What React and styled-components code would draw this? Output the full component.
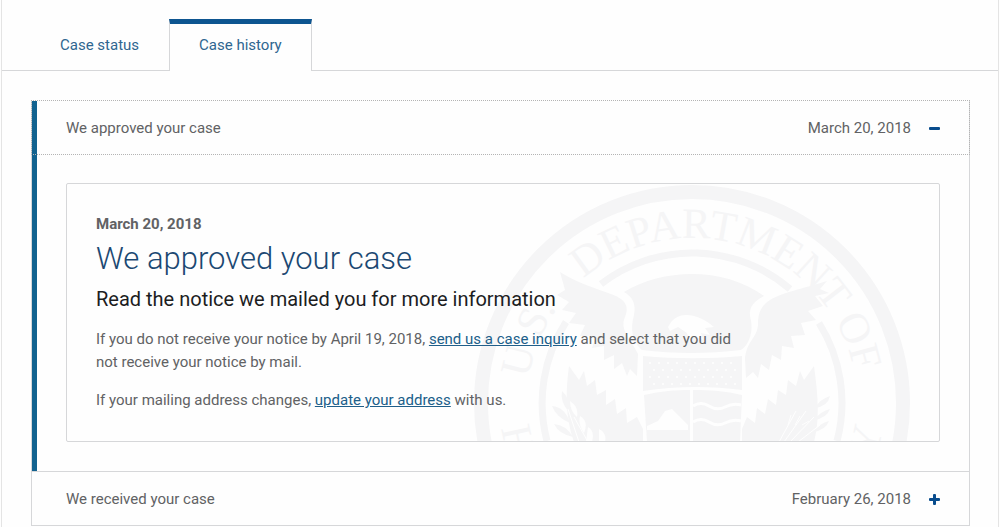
import React, { useState } from "react";
import styled, { createGlobalStyle } from "styled-components";

const blue = "#0d5590";
const line = "#d6d7d9";
const mark = "#f5f5f6";

const GlobalStyle = createGlobalStyle`
  *, *::before, *::after { box-sizing: border-box; }
  body {
    margin: 0;
    background: #fefefe;
    color: #616264;
    font: 400 15px/23px Roboto, "Open Sans", sans-serif;
  }
`;

const Page = styled.main`
  min-height: 100vh;
  margin: 0 1px;
  border: 1px solid #e4e4e4;
  border-width: 0 1px;
  padding-top: 19px;
`;

const Tabs = styled.div`
  display: flex;
  padding-left: 28px;
  box-shadow: inset 0 -1px ${line};
`;

const Tab = styled.button`
  height: 52px;
  padding: 0 29px 4px;
  border: 1px solid ${(p) => (p.$active ? line : "transparent")};
  border-top: 5px solid ${(p) => (p.$active ? blue : "transparent")};
  border-bottom: 0;
  background: ${(p) => (p.$active ? "#fefefe" : "transparent")};
  color: #2f6690;
  font: inherit;
  cursor: pointer;
`;

const Accordion = styled.section`
  margin: 30px 28px 0 29px;
  border: 1px solid ${line};
  border-width: 0 1px;
`;

const Item = styled.article`
  border-bottom: 1px solid ${line};
  box-shadow: ${(p) => (p.$open ? "inset 5px 0 #12628f" : "none")};
`;

const ItemTitle = styled.h3`
  margin: 0;
  font: inherit;
`;

const ItemButton = styled.button`
  display: flex;
  align-items: center;
  width: 100%;
  height: 53px;
  padding: 2px 29px 0 34px;
  border: 0;
  background: transparent;
  color: inherit;
  font: inherit;
  text-align: left;
  cursor: pointer;
  outline: ${(p) => (p.$open ? "1px dotted #b4b4b4" : "none")};
`;

const ItemDate = styled.span`
  margin-left: auto;
  margin-right: 18px;
`;

const Sign = styled.svg`
  display: block;
  width: 11px;
  height: 11px;
  fill: #084c8d;
`;

const Panel = styled.div`
  padding: 29px 29px 29px 34px;
`;

const Card = styled.div`
  position: relative;
  overflow: hidden;
  padding: 29px;
  border: 1px solid ${line};
  border-radius: 2px;
`;

const Seal = styled.svg`
  position: absolute;
  top: 0;
  right: 27px;
  width: 440px;
  height: 258px;
`;

const SealText = styled.text`
  font-family: "Liberation Serif", serif;
  font-size: 43px;
  fill: ${mark};
`;

const Content = styled.div`
  position: relative;
  max-width: 656px;
`;

const CardDate = styled.p`
  margin: 0;
  font-weight: 700;
`;

const Heading = styled.h2`
  margin: 0 0 5px;
  color: #1b4872;
  font-size: 31px;
  font-weight: 300;
  line-height: 46px;
`;

const Subheading = styled.h4`
  margin: 0 0 17px;
  color: #1c1d1f;
  font-size: 20px;
  font-weight: 400;
  line-height: 24px;
`;

const Text = styled.p`
  margin: 0 0 15px;
  &:last-child { margin: 0; }
`;

const Link = styled.a`
  color: #205f8a;
  text-decoration: underline;
`;

const stars = [];
for (let row = 0; row < 4; row += 1) {
  for (let col = 0; col < 10; col += 1) {
    stars.push([-42 + col * 9 + (row % 2) * 4, -40 + row * 7]);
  }
}

function DepartmentSeal() {
  return (
    <Seal viewBox="-220 -219 440 258" aria-hidden="true">
      <defs>
        <path id="seal-top" d="M-165 0A165 165 0 0 1 165 0" />
        <path id="seal-bottom" d="M-192 0A192 192 0 0 0 192 0" />
      </defs>
      <g fill="none" stroke={mark}>
        <circle r="211" strokeWidth="14" />
        <path strokeWidth="7" d="M-91 -119A150 150 0 0 1 98 -114" />
        <path strokeWidth="7" d="M-126 -81A150 150 0 0 0 -145 38M127 -80A150 150 0 0 1 145 38" />
      </g>
      <SealText><textPath href="#seal-top" startOffset="4.7%">U.S.</textPath></SealText>
      <SealText textAnchor="middle"><textPath href="#seal-top" startOffset="54.4%">DEPARTMENT</textPath></SealText>
      <SealText><textPath href="#seal-top" startOffset="83.3%">OF</textPath></SealText>
      <SealText><textPath href="#seal-bottom" startOffset="4.2%">H</textPath></SealText>
      <SealText textAnchor="end"><textPath href="#seal-bottom" startOffset="95.8%">Y</textPath></SealText>
      <g fill={mark}>
        <path d="M-68 -111C-28 -135 32 -136 72 -107C62 -102 57 -96 58 -87C62 -73 58 -59 49 -53C16 -49 -18 -49 -50 -53C-60 -61 -62 -74 -58 -88C-56 -99 -59 -106 -68 -111Z" />
        <path d="M-132 -131C-117 -121 -94 -114 -76 -107C-66 -102 -63 -96 -67 -86C-73 -73 -60 -62 -54 -49L-55 -27L-62 -34L-65 -27L-70 -40L-78 -34L-78 -48L-88 -43L-88 -57L-100 -55L-96 -67L-112 -67L-107 -78L-123 -80L-116 -90L-130 -93L-123 -101L-135 -108L-127 -113Z" />
        <path d="M135 -122C117 -116 91 -111 78 -103C67 -96 66 -87 66 -78C65 -65 54 -61 53 -44L54 -25L61 -31L66 -25L69 -39L77 -33L80 -48L89 -43L90 -57L102 -55L99 -67L113 -68L109 -80L124 -83L116 -92L131 -97L123 -107L137 -110L128 -114Z" />
        <path d="M-123 -37L-113 -23L-108 -32L-105 -17L-97 -23L-95 -8L-86 -13L-86 2L-77 -4L-75 11L-66 5L-65 20L-55 14L-49 26V39H-118C-126 16 -127 -8 -123 -37Z" />
        <path d="M122 -37L112 -23L108 -32L104 -17L96 -23L94 -8L86 -13L84 2L76 -4L73 11L65 5L63 20L55 14L50 26V39H122C128 16 126 -8 122 -37Z" />
        <path d="M-49 -47C-16 -44 18 -44 50 -47V-13C18 -17 -16 -17 -49 -12Z" />
        <path d="M-48 -8C-31 -12 -16 -13 -2 -13V39H-45Z" />
        <path d="M1 -13C18 -13 34 -12 50 -8L48 39H1Z" />
        <path d="M-122 20Q-136 14 -140 3Q-127 4 -122 20ZM-119 34Q-133 31 -138 21Q-126 22 -119 34ZM-124 8Q-132 -2 -130 -12Q-121 -4 -124 8Z" />
        <path d="M123 5Q128 -4 138 -7Q136 3 123 5ZM122 17Q129 8 138 6Q135 15 122 17ZM121 29Q128 20 137 18Q134 27 121 29Z" />
      </g>
      <g fill="#fefefe">
        <path d="M-24 -76C-20 -84 -14 -88 -6 -88C5 -88 15 -82 22 -76L13 -75L18 -68L9 -70L11 -63L2 -67L-2 -60L-5 -70L-14 -76L-22 -72Z" />
        <path d="M-45 23L-34 18L-27 8L-20 6L-13 13L-4 22V27H-45Z" />
        <path d="M-122 -2Q-113 4 -115 14Q-122 8 -122 -2ZM-112 13Q-103 18 -108 30Q-114 22 -112 13ZM-104 24Q-97 28 -100 39H-106ZM-93 26Q-85 30 -87 39H-93Z" />
        {stars.map(([x, y]) => <circle key={`${x},${y}`} cx={x} cy={y} r="1" />)}
      </g>
      <g fill="none" stroke="#fefefe" strokeWidth="3">
        <path d="M1 3Q9 -2 17 3T33 4T49 2M1 19Q9 14 17 19T33 20T49 18" />
        <path strokeWidth="1" d="M-124 6L-113 39M-118 14L-104 39M87 39L104 8M92 39L114 8M98 39L122 14M106 39L128 22M96 22L99 12M103 22L108 13M110 22L117 18" />
      </g>
    </Seal>
  );
}

function ToggleSign({ open }) {
  return (
    <Sign viewBox="0 0 11 11" aria-hidden="true">
      <rect y="4" width="11" height="3" rx="1" />
      {!open && <rect x="4" width="3" height="11" rx="1" />}
    </Sign>
  );
}

function HistoryItem({ title, date, open, onToggle, children }) {
  return (
    <Item $open={open}>
      <ItemTitle>
        <ItemButton type="button" $open={open} aria-expanded={open} onClick={onToggle}>
          <span>{title}</span>
          <ItemDate>{date}</ItemDate>
          <ToggleSign open={open} />
        </ItemButton>
      </ItemTitle>
      {open && children && <Panel>{children}</Panel>}
    </Item>
  );
}

export default function App() {
  const [tab, setTab] = useState("Case history");
  const [openItem, setOpenItem] = useState("approved");
  const toggle = (id) => setOpenItem(openItem === id ? null : id);

  return (
    <>
      <GlobalStyle />
      <Page>
        <Tabs role="tablist">
          {["Case status", "Case history"].map((name) => (
            <Tab
              key={name}
              type="button"
              role="tab"
              aria-selected={tab === name}
              $active={tab === name}
              onClick={() => setTab(name)}
            >
              {name}
            </Tab>
          ))}
        </Tabs>
        <Accordion>
          <HistoryItem
            title="We approved your case"
            date="March 20, 2018"
            open={openItem === "approved"}
            onToggle={() => toggle("approved")}
          >
            <Card>
              <DepartmentSeal />
              <Content>
                <CardDate>March 20, 2018</CardDate>
                <Heading>We approved your case</Heading>
                <Subheading>Read the notice we mailed you for more information</Subheading>
                <Text>
                  If you do not receive your notice by April 19, 2018,{" "}
                  <Link href="#inquiry">send us a case inquiry</Link> and select that you did not
                  receive your notice by mail.
                </Text>
                <Text>
                  If your mailing address changes, <Link href="#address">update your address</Link>{" "}
                  with us.
                </Text>
              </Content>
            </Card>
          </HistoryItem>
          <HistoryItem
            title="We received your case"
            date="February 26, 2018"
            open={openItem === "received"}
            onToggle={() => toggle("received")}
          />
        </Accordion>
      </Page>
    </>
  );
}
